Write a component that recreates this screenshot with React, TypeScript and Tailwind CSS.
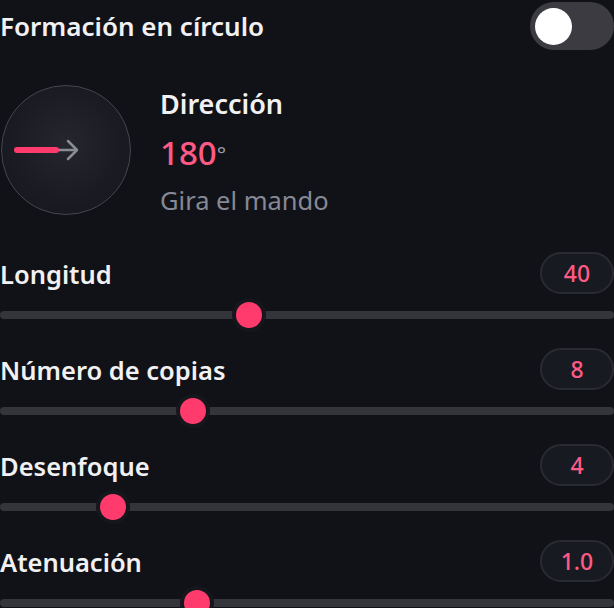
import React from "react";

const FONT = { fontFamily: '"Noto Sans", "Open Sans", sans-serif' };

function Slider({ label, value, pos }: { label: string; value: string; pos: number }) {
  return (
    <div className="flex flex-col">
      <div className="flex h-[42px] items-center justify-between">
        <span className="mt-[3px] text-[25.5px] font-semibold leading-none text-[#f1f1f4]">{label}</span>
        <div className="flex h-[42px] w-[74px] items-center justify-center rounded-full border-2 border-[#2a2b31] bg-[#181a21] text-[23px] font-medium text-[#ff5a86]">
          {value}
        </div>
      </div>
      <div className="relative mt-[8px] h-[26px]">
        <div className="absolute left-0 right-0 top-[9px] h-[8px] rounded-full bg-[#34353b]" />
        <div
          className="absolute top-0 h-[26px] w-[26px] rounded-full bg-[#ff3b6e] shadow-[0_0_0_4px_#16171c]"
          style={{ left: `${pos - 13}px` }}
        />
      </div>
    </div>
  );
}

export default function App() {
  return (
    <div className="h-[608px] w-[614px] overflow-hidden bg-[#111217]" style={FONT}>
      <div className="flex h-[52px] items-center justify-between">
        <span className="text-[26px] font-semibold leading-none text-[#f1f1f4]">Formación en círculo</span>
        <div className="flex h-[48px] w-[84px] items-center rounded-full bg-[#3c3b42] px-[5px]">
          <div className="h-[37px] w-[37px] rounded-full bg-white" />
        </div>
      </div>

      <div className="mt-[33px] flex items-start gap-[29px] pl-[1px]">
        <div className="relative h-[130px] w-[130px] shrink-0 rounded-full border-[1.5px] border-[#46464d] bg-[radial-gradient(circle_at_50%_45%,#26262e_0%,#1b1c23_55%,#15161c_100%)]">
          <svg className="absolute left-[-1.5px] top-[-1.5px]" width="130" height="130" viewBox="0 0 130 130">
            <line x1="57" y1="65" x2="75" y2="65" stroke="#8a8c96" strokeWidth="2.5" strokeLinecap="round" />
            <polyline points="67,56 76,65 67,74" fill="none" stroke="#8a8c96" strokeWidth="2.5" strokeLinecap="round" strokeLinejoin="round" />
            <line x1="16" y1="65" x2="55" y2="65" stroke="#ff3b6e" strokeWidth="6" strokeLinecap="round" />
          </svg>
        </div>
        <div className="flex flex-col">
          <div className="flex h-[36px] items-center text-[27px] font-semibold leading-none text-[#f1f1f4]">Dirección</div>
          <div className="flex h-[62px] items-center">
            <span className="text-[33px] font-medium leading-none text-[#ff5a86]">180</span>
            <span className="relative top-[1px] text-[22px] leading-none text-[#9a9ca6]">°</span>
          </div>
          <div className="flex h-[36px] items-center text-[25.5px] leading-none text-[#868995]">Gira el mando</div>
        </div>
      </div>

      <div className="mt-[33px] flex flex-col gap-[20px]">
        <Slider label="Longitud" value="40" pos={249} />
        <Slider label="Número de copias" value="8" pos={193} />
        <Slider label="Desenfoque" value="4" pos={113} />
        <Slider label="Atenuación" value="1.0" pos={197} />
      </div>
    </div>
  );
}
